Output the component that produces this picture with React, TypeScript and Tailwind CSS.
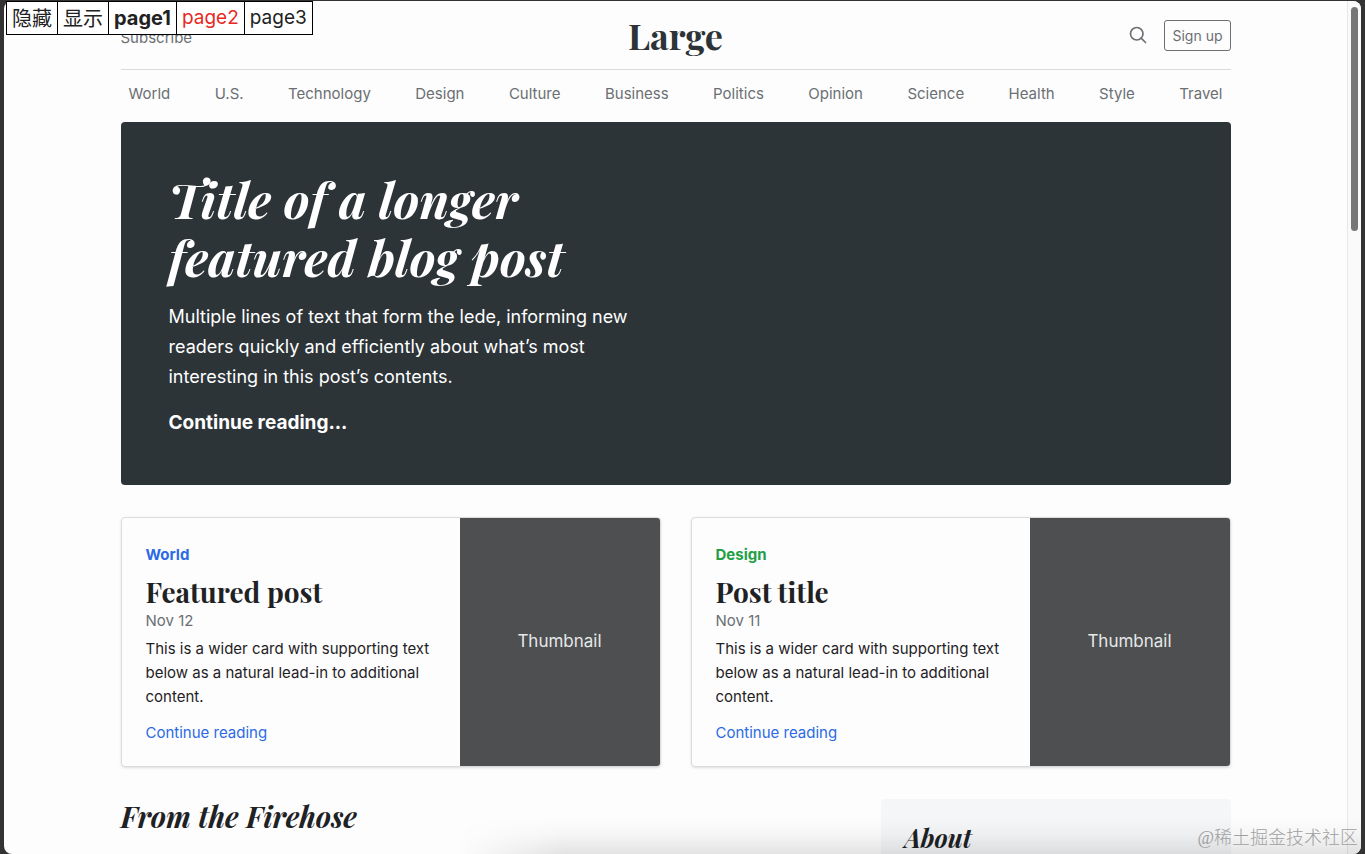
const sections = [
  'World',
  'U.S.',
  'Technology',
  'Design',
  'Culture',
  'Business',
  'Politics',
  'Opinion',
  'Science',
  'Health',
  'Style',
  'Travel',
]

interface Post {
  category: string
  categoryClass: string
  title: string
  date: string
}

const posts: Post[] = [
  { category: 'World', categoryClass: 'text-[#2b6ae6]', title: 'Featured post', date: 'Nov 12' },
  { category: 'Design', categoryClass: 'text-[#22a045]', title: 'Post title', date: 'Nov 11' },
]

const serif = "font-['Playfair_Display','Liberation_Serif',serif] font-bold"

function SearchIcon() {
  return (
    <svg width="20" height="20" viewBox="0 0 24 24" fill="none" stroke="currentColor" strokeWidth="2" strokeLinecap="round">
      <circle cx="10.5" cy="10.5" r="7.5" />
      <path d="M21 21l-5.2-5.2" />
    </svg>
  )
}

function Switcher() {
  const box = '-ml-px border border-black bg-white px-[5px] h-[34px] leading-8'
  return (
    <div className="absolute top-px left-[7px] z-10 flex text-[19px] text-[#222]">
      <button className={`${box} font-['Noto_Sans_CJK_SC',sans-serif] text-[20px]`}>隐藏</button>
      <button className={`${box} font-['Noto_Sans_CJK_SC',sans-serif] text-[20px]`}>显示</button>
      <button className={`${box} text-[20px] font-bold`}>page1</button>
      <button className={`${box} text-[#e8291f]`}>page2</button>
      <button className={box}>page3</button>
    </div>
  )
}

function PostCard({ post }: { post: Post }) {
  return (
    <article className="flex flex-1 overflow-hidden rounded border border-[#d9dbdd] shadow-sm">
      <div className="flex-1 px-6 pt-[25px] pb-[21px] text-[15px] leading-6">
        <strong className={`mb-2 block ${post.categoryClass}`}>{post.category}</strong>
        <h3 className={`${serif} text-[28px] leading-[34px]`}>{post.title}</h3>
        <div className="mb-1 text-[#6b6f73]">{post.date}</div>
        <p className="mb-3">
          This is a wider card with supporting text below as a natural lead-in to additional content.
        </p>
        <a href="#" className="block text-[#2b6ae6]">
          Continue reading
        </a>
      </div>
      <div className="flex w-[200px] shrink-0 items-center justify-center bg-[#4d4f50] text-[17px] text-[#e6e8e9]">
        Thumbnail
      </div>
    </article>
  )
}

export default function App() {
  return (
    <div className="relative h-screen overflow-hidden bg-[#333] px-1 pt-px font-['Inter','Noto_Sans_CJK_SC',sans-serif] text-[#1f2225]">
      <Switcher />

      <div className="relative flex h-full overflow-hidden rounded-lg bg-[#fdfdfd]">
        <div className="min-w-0 flex-1 overflow-hidden">
          <div className="mx-auto max-w-[1110px]">
            <header className="grid h-[69px] grid-cols-3 items-center border-b border-[#d9dbdd]">
              <a href="#" className="pt-1.5 text-[15px] text-[#6b6f73]">
                Subscribe
              </a>
              <a href="#" className={`${serif} text-center text-[36px] text-[#2d3438]`}>
                Large
              </a>
              <div className="flex items-center justify-end gap-4 text-[#6b6f73]">
                <a href="#" aria-label="Search">
                  <SearchIcon />
                </a>
                <button className="h-[31px] rounded-[3px] border border-[#6b6f73] px-[7px] text-[14px]">
                  Sign up
                </button>
              </div>
            </header>

            <nav className="mb-1 flex justify-between px-2 py-3 text-[15px] leading-6 text-[#6b6f73]">
              {sections.map(name => (
                <a key={name} href="#">
                  {name}
                </a>
              ))}
            </nav>

            <section className="mb-8 rounded bg-[#2d3438] px-12 pt-12 pb-[47px] text-white">
              <div className="max-w-[507px]">
                <h1 className={`${serif} max-w-[440px] text-[49px] leading-[58px] italic`}>
                  Title of a longer featured blog post
                </h1>
                <p className="my-4 max-w-[480px] text-[18px] leading-[30px]">
                  Multiple lines of text that form the lede, informing new readers quickly and efficiently
                  about what’s most interesting in this post’s contents.
                </p>
                <a href="#" className="block text-[19px] leading-[30px] font-bold">
                  Continue reading...
                </a>
              </div>
            </section>

            <div className="mb-8 flex gap-[30px]">
              {posts.map(post => (
                <PostCard key={post.title} post={post} />
              ))}
            </div>

            <div className="flex gap-[30px]">
              <main className="flex-1">
                <h3 className={`${serif} text-[29px] leading-[34px] italic`}>From the Firehose</h3>
              </main>
              <aside className="h-40 w-[350px] rounded bg-[#f4f6f8] p-6">
                <h4 className={`${serif} text-[25px] leading-[29px] italic`}>About</h4>
              </aside>
            </div>
          </div>
        </div>

        <div className="w-[14px] shrink-0 border-l border-[#e8e8e8] bg-[#fafafa] pt-1.5">
          <div className="mx-auto h-56 w-[7px] rounded-full bg-[#777]" />
        </div>

        <div className="pointer-events-none absolute right-0 bottom-0 left-1/3 h-9 bg-[linear-gradient(to_top,rgba(0,0,0,0.1),rgba(0,0,0,0.03)_50%,transparent)] [mask-image:linear-gradient(to_right,transparent,black_12%)]" />
      </div>

      <div className="absolute right-[7px] bottom-1 font-['Liberation_Serif','Noto_Sans_CJK_SC',serif] text-[18px] leading-6 font-light text-[#a0a0a0]">
        @稀土掘金技术社区
      </div>
    </div>
  )
}
